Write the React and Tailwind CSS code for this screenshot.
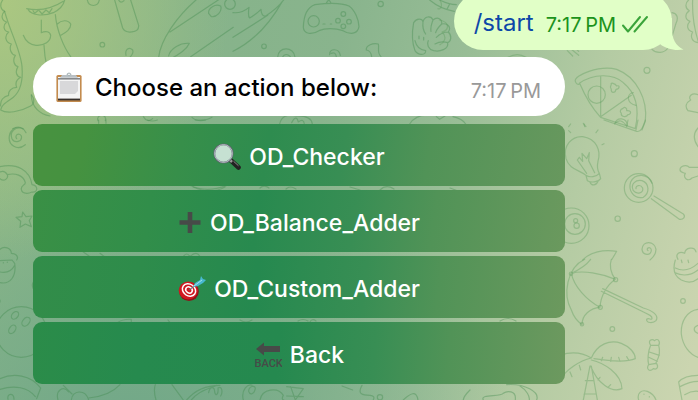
import React from "react";

function Doodles() {
  return (
    <svg
      className="pointer-events-none absolute inset-0 h-full w-full"
      viewBox="0 0 698 400"
      preserveAspectRatio="xMinYMin slice"
      fill="none"
      strokeLinecap="round"
      strokeLinejoin="round"
      aria-hidden="true"
    >
      <g stroke="#408a4d" strokeOpacity="0.38" strokeWidth="3.6">
        <g transform="scale(.3333)">
          {/* dinosaur */}
          <path d="M8 0C-2 14 2 30 14 34C2 44 4 62 20 66C8 76 10 94 26 96C12 108 16 128 34 132C26 146 34 164 46 166C36 182 44 198 54 200C44 216 50 230 62 232C48 240 46 252 50 262C34 262 24 274 26 286C10 290 0 302 2 318" />
          <path d="M14 34C28 90 62 150 66 200C70 250 60 275 40 292C20 306 4 314 2 330C20 342 60 336 92 318C104 312 104 296 94 284M132 136C134 180 144 222 160 260" />
          <path d="M80 26C110 32 150 30 190 4M84 28C92 46 130 50 160 38C176 30 190 18 194 0M98 30l6 10l12-10l10 12l12-12l10 8l8-12M124 60V98C136 92 150 94 152 106C152 124 134 138 108 136C90 134 76 122 70 106M166 44C170 90 190 140 212 170M172 72C184 60 204 58 212 72C214 88 196 98 182 106" />
          {/* tube, dots and leaf */}
          <path d="M344 0L368 84C376 102 418 100 416 76L392 0M356 0q6 12 16 2M262 0C266 22 294 22 298 0" />
          <circle cx="307" cy="134" r="7" />
          <path d="M378 166C374 146 388 140 398 150C402 160 394 166 390 172" />
          <path d="M588 0C530 50 482 120 476 172M510 96L700 -30M506 168C510 146 540 128 568 130C560 150 534 166 506 180M572 170L700 82M626 40C624 24 646 10 662 18C668 34 650 52 634 50Z" />
          <circle cx="690" cy="12" r="16" />
          <path d="M294 362a12 12 0 1 1 22 0M430 350q12 20 28 6M576 352q22 20 60 0M38 386q16-10 32 0M94 286C94 320 120 344 150 348" />
        </g>
        <g transform="translate(233 0) scale(.3333)">
          {/* gamepad */}
          <path d="M246 14C290 8 330 10 348 18C366 30 378 62 378 80C374 104 350 104 330 92C306 84 276 84 258 92C236 106 212 102 211 82C212 50 222 22 246 14ZM280 10q8-18 14 0M270 72h6M292 72h4" />
          <circle cx="242" cy="64" r="17" />
          <circle cx="331" cy="42" r="7" /><circle cx="315" cy="62" r="7" /><circle cx="348" cy="65" r="7" /><circle cx="331" cy="79" r="7" />
          <circle cx="443" cy="12" r="8" /><circle cx="93" cy="139" r="7" />
          <path d="M0 38C20 40 34 34 48 22C46 38 44 48 50 54C64 46 74 38 84 28C84 42 90 50 98 48C120 34 140 16 152 0M0 112L104 46M0 154C60 124 110 72 148 4" />
          <path d="M134 172C134 138 184 138 186 172M148 172q10-16 24-2M290 164C288 144 318 144 322 166M294 160q14-6 16 10M400 150C398 136 420 128 436 132C440 148 430 156 444 170M400 150q14 2 16 20" />
          {/* baseball glove */}
          <path d="M546 152C534 120 538 90 542 68C550 54 568 54 570 66C574 48 594 46 600 60C614 48 628 58 626 72C644 68 656 82 646 96C658 108 654 124 644 128C648 148 620 156 602 152C586 148 580 132 586 122M570 66C568 84 572 94 578 102M600 60C594 76 592 84 594 94M626 72C616 82 610 90 608 98M646 96q-20 0-36 16M644 128q-20-6-38 4M546 122C550 140 562 150 578 152C580 166 556 168 546 152M558 108v8M572 112v8" />
          <path d="M590 0C614 20 640 30 664 34M620 0C640 10 656 14 670 14M650 12l-8 16" />
          <path d="M140 372q8-34 50-24q44-2 48 24M176 368q14-26 20-2q16-12 18 6M530 372q20-30 60-26M610 350l10 8l16-10M660 350q28 6 38 22" />
        </g>
      </g>
      <g stroke="#5c9c5b" strokeOpacity="0.38" strokeWidth="3.6">
        <g transform="translate(440 0) scale(.3333)">
          {/* pizza slice */}
          <path d="M406 244C400 226 480 194 530 208C590 230 624 300 616 364L606 390M418 250C460 220 520 220 550 248C590 280 598 330 586 384M406 244q4 12 14 8C436 290 456 324 482 352L586 386M482 230V350L574 286" />
          <circle cx="470" cy="284" r="26" />
          <path d="M580 278C560 280 558 310 588 316M524 372C530 350 560 352 562 376M514 254C510 246 526 250 530 258C542 254 538 268 528 268C526 280 512 280 514 268C508 260 512 258 514 254ZM548 326C554 318 562 324 560 332C576 330 574 344 564 344C558 354 542 350 544 340C538 334 542 328 548 326Z" />
          <circle cx="621" cy="211" r="9" />
          <path d="M382 152l16 16M394 148l22 18M404 142l12 12M204 172q28-16 54 0M696 38C712 40 716 54 708 70L694 116M636 148C650 162 672 160 684 144" />
          <path d="M746 0C734 10 736 26 748 32C734 42 734 58 750 64C738 76 742 92 758 96C750 110 756 126 774 128M758 0C756 50 762 90 780 140M774 284C756 276 744 290 752 300C738 308 734 320 744 332L774 338" />
          <path d="M0 0C10 20 0 30 -6 26M-2 60C30 66 28 90 6 96C24 112 10 130 0 134" />
          <path d="M386 380l6-8M430 370l8 10" />
        </g>
        <g transform="translate(560 120) scale(.3333)">
          {/* bulb */}
          <path d="M78 166C60 150 28 150 18 116C8 76 36 48 68 50C108 56 124 90 114 124C110 142 112 150 118 160M78 166C88 174 110 170 118 160L122 176C114 188 92 188 82 182ZM90 186C94 198 108 198 114 184M80 160L52 120L58 112L68 124L66 100L80 116L88 98L86 122L104 158M26 32l6 6M72 12l2 8M114 30l-6 8M132 71l-6 3" />
          <path d="M132 0L230 34C244 38 250 18 256 0M166 10q16-18 34 8M204 0l-4 20M234 0l-6 30" />
          <circle cx="223" cy="101" r="9" /><circle cx="173" cy="296" r="8" />
          {/* lollipop */}
          <circle cx="236" cy="204" r="43" />
          <path d="M228 206C226 196 242 192 248 204C252 220 230 224 220 212C210 192 228 178 246 182C268 190 270 218 250 232M250 232C220 238 204 210 212 186C226 158 264 160 276 190M274 236L358 298C370 300 378 290 370 282L282 228" />
          <path d="M414 142L388 142C380 132 360 138 360 150C362 158 370 158 376 160C368 174 384 186 396 174L414 168M414 24Q392 48 414 80" />
          {/* eight ball */}
          <circle cx="34" cy="317" r="53" /><circle cx="45" cy="312" r="31" /><circle cx="47" cy="302" r="6" /><circle cx="50" cy="317" r="8" />
          <path d="M264 392C256 384 272 378 274 390C274 410 248 406 246 388C248 360 284 362 288 388C288 402 280 412 270 420M68 420C90 396 130 388 170 394L156 418M354 418C344 402 360 392 374 400C376 382 404 378 408 396" />
        </g>
        <g transform="translate(560 260) scale(.3333)">
          {/* umbrella */}
          <path d="M74 -2C20 24 8 104 34 150C40 168 52 184 66 194C66 164 92 144 120 142C122 108 140 76 166 58C146 30 150 10 154 -2M34 40C70 30 124 40 166 58M34 40C42 80 80 120 120 142M34 40C64 26 80 14 92 -2M128 86L250 144C278 152 298 166 288 182C280 190 258 190 260 178C268 172 272 182 276 176C278 166 262 162 246 154L124 94" />
          <circle cx="33" cy="41" r="5" /><circle cx="121" cy="142" r="6" /><circle cx="167" cy="59" r="6" /><circle cx="66" cy="193" r="5" />
          <circle cx="157" cy="207" r="7" /><circle cx="369" cy="123" r="7" />
          {/* palm */}
          <path d="M94 294C64 276 34 274 0 286M94 294C112 252 150 238 184 250C210 260 226 280 226 296C196 310 140 302 102 296M94 294C60 302 18 328 0 360M94 300C130 308 184 340 186 386C154 400 112 370 92 318M90 318L70 420M94 318L112 420M76 362h26M72 402h36M124 302l4-10M152 304l2-12M180 304l-4-12M206 300l-6-10M30 336l6 14M58 316l4 14M120 352l-6 8M152 374l-6 6" />
          {/* sweet */}
          <path d="M272 256C262 240 276 236 284 242C294 232 302 246 296 256C302 274 296 294 288 308C298 322 290 330 280 326C268 338 258 326 266 314C262 300 264 274 272 256ZM272 256L296 256M268 276L298 286M266 292L292 304M266 314L288 310" />
          <path d="M346 0C338 26 342 48 364 60C384 70 402 66 414 56M346 24C370 36 394 28 414 10M344 38C370 50 396 44 414 30M364 0l2 8M384 0l2 8M414 148C380 152 362 186 364 222C368 258 390 284 414 292M414 196C400 200 398 214 414 220M236 420C230 400 244 388 262 394C278 400 286 414 288 420M252 402v1M268 410v1M356 366C370 350 394 346 414 346M356 366L366 420M360 380Q390 364 414 364M374 404Q394 392 414 394" />
        </g>
      </g>
      <g stroke="#408a4d" strokeOpacity="0.38" strokeWidth="3.6">
        <g transform="translate(0 120) scale(.3333)">
          <path d="M50 56C42 46 58 36 64 48C68 64 44 72 36 56C24 26 66 10 78 38M76 74C52 94 24 76 28 48C30 30 46 20 62 24M0 140C50 128 90 150 96 194C114 196 116 218 96 216C84 222 66 222 64 208C62 194 76 196 76 188C70 166 46 158 22 164C26 176 12 186 0 176M0 156q14-6 22 8M68 276L78 290L96 288L88 302L94 320L76 312L60 322L62 304L48 292L66 290ZM0 388C12 376 34 384 34 400C50 400 56 412 50 420M296 0v10M318 0v10M442 0q16 6 30 0M586 0h30M570 196Q620 220 680 196M250 396l20 14M300 400l16 12M550 410q10-16 20 0q20-20 30 0" />
        </g>
        <g transform="translate(0 260) scale(.3333)">
          <path d="M0 2L36 0L44 10C50 50 30 74 0 68M0 36C20 40 36 32 44 16M10 8v1M22 6v1M0 120v6M100 66q-6 10 0 20" />
          <circle cx="64" cy="216" r="76" />
          <ellipse cx="45" cy="166" rx="9" ry="13" transform="rotate(40 45 166)" /><ellipse cx="78" cy="185" rx="10" ry="15" transform="rotate(40 78 185)" /><ellipse cx="37" cy="208" rx="9" ry="14" transform="rotate(35 37 208)" />
          <path d="M0 356C40 338 92 344 122 384L110 416M0 388C44 374 84 382 106 410M24 418C20 398 42 398 42 418M352 188Q370 176 394 178V188M504 180l6 8M174 420C166 390 190 376 206 396M190 376L216 402M214 420C216 390 256 386 266 420M266 414C310 410 340 396 360 374M466 374C460 390 464 406 468 420M516 374L550 420M560 420C580 396 610 376 660 376M574 420C600 386 640 384 650 376M626 398C630 376 644 380 644 396C648 412 656 402 654 384C668 376 668 400 662 408" />
        </g>
        <g transform="translate(170 360) scale(.3333)">
          <path d="M220 120C212 90 234 70 246 76M236 94C236 78 256 74 256 86C252 104 240 106 236 94ZM270 120C276 86 324 80 340 106C334 116 338 120 342 120M350 80L400 86L376 120L362 80M350 108L400 110M516 78L548 90M576 76C560 104 580 106 600 106C620 108 608 120 610 120M700 120C720 100 740 90 744 120M940 120C930 100 990 112 1000 100C1010 92 1040 90 1036 120M900 90C880 110 880 120 880 120M1010 74C1064 70 1110 96 1100 120M1050 78C1070 90 1080 110 1078 120" />
          <circle cx="630" cy="112" r="8" />
        </g>
        <path d="M193 187q18 8 32 0M260 188q4-4 9 0M286 189q4-4 10 0M350 187l10 3M380 190q6-6 14-1M298 321q5-3 10 0M310 322q2-4 6-1M240 320q6 4 12 0M450 188l8 3M500 321q8-5 16 0" strokeWidth="1.2" />
      </g>
    </svg>
  );
}

function Clipboard() {
  return (
    <svg className="h-8 w-7 shrink-0" viewBox="0 0 28 32" aria-hidden="true">
      <rect x="1.4" y="4" width="25.2" height="27" rx="1.6" fill="#c38b4e" />
      <rect x="3" y="6" width="22" height="23" fill="#f4f4f4" />
      <path d="M5 10h18v10l-3 3H5z" fill="#d8d8da" />
      <path d="M3 27.6h22v1.8H3z" fill="#37302c" />
      <path d="M3 7h22v1.6H3z" fill="#85888b" />
      <path d="M5 6.8 7 4h4.5C11.5 1 16.5 1 16.5 4H21l2 2.8z" fill="#b9c0c4" />
      <circle cx="14" cy="3.4" r="1.3" fill="#fff" stroke="#8fa0a4" strokeWidth=".7" />
    </svg>
  );
}

function Magnifier() {
  return (
    <svg className="h-7 w-7 shrink-0" viewBox="0 0 28 28" aria-hidden="true">
      <path d="m18 17.500 7.500 7" stroke="#222" strokeWidth="4.600" strokeLinecap="round" />
      <path d="m20.500 18.200 5 4.600" stroke="#8a8a8a" strokeWidth="1" />
      <path d="m16 16 3 3" stroke="#999" strokeWidth="2.500" />
      <circle cx="10.500" cy="10.500" r="9.200" fill="#c6e1d2" stroke="#5d666b" strokeWidth="1.800" />
      <circle cx="10.500" cy="10.500" r="8.900" fill="none" stroke="#c3c9d4" strokeWidth=".9" />
    </svg>
  );
}

function Plus() {
  return (
    <svg className="h-7 w-6 shrink-0" viewBox="0 0 24 28" aria-hidden="true">
      <path d="M1.500 13.500h21M12 3v21" stroke="#474a48" strokeWidth="4.600" />
    </svg>
  );
}

function Dart() {
  return (
    <svg className="h-7 w-7 shrink-0" viewBox="0 0 28 28" aria-hidden="true">
      <ellipse cx="11" cy="16.500" rx="9.800" ry="9.500" fill="#8e1419" />
      <ellipse cx="10.300" cy="15.500" rx="9.600" ry="9" fill="#cf1820" />
      <g fill="none" stroke="#fff" strokeWidth="1.500" transform="rotate(35 11 15)">
        <ellipse cx="11" cy="15" rx="7" ry="5.800" />
        <ellipse cx="11" cy="15" rx="3.500" ry="2.800" />
      </g>
      <path d="m11 15 10-7" stroke="#55737a" strokeWidth="1" />
      <path d="m15 12 2-4 5-3 1-4 2 3 3 1-3 3-5 3z" fill="#48b8d0" />
      <path d="m16 11 8-6" stroke="#b9edf3" strokeWidth=".8" />
    </svg>
  );
}

function BackArrow() {
  return (
    <svg className="h-7 w-7 shrink-0" viewBox="0 0 28 28" aria-hidden="true">
      <path d="M2 8 10 1.500V5h16v6H10v3.500z" fill="#474a48" />
      <text x="0.500" y="25.500" fontFamily="Roboto, sans-serif" fontSize="11" fontWeight="500" fill="#474a48">BACK</text>
    </svg>
  );
}

const actions = [
  {
    label: "OD_Checker",
    icon: Magnifier,
    tone: "bg-[linear-gradient(100deg,#489240_0%,#459240_10%,#378f4a_28%,#2e8c4f_44%,#388e54_58%,#519357_74%,#68985e_100%)]",
  },
  {
    label: "OD_Balance_Adder",
    icon: Plus,
    tone: "bg-[linear-gradient(98deg,#3a9045_0%,#318e4a_22%,#288a4f_42%,#388e54_60%,#519357_75%,#6b995e_100%)]",
  },
  {
    label: "OD_Custom_Adder",
    icon: Dart,
    tone: "bg-[linear-gradient(96deg,#328d49_0%,#2e8c4b_20%,#25894f_42%,#388e54_62%,#519357_76%,#6c995e_100%)]",
  },
  {
    label: "Back",
    icon: BackArrow,
    tone: "bg-[linear-gradient(94deg,#2b8c49_0%,#268a4e_20%,#25894f_46%,#388e54_64%,#519357_78%,#6d995f_100%)]",
  },
];

export default function App() {
  return (
    <main className="relative min-h-screen overflow-hidden bg-[radial-gradient(ellipse_230px_260px_at_0px_0px,#abc781_0%,#abc78100_100%),radial-gradient(ellipse_380px_260px_at_130px_420px,#72a888_0%,#72a88800_100%),linear-gradient(104deg,#8fb987_0%,#86b38a_24%,#89b48d_44%,#98bd96_60%,#b4cba3_78%,#cbd5b0_98%)] font-['Inter','Liberation_Sans',sans-serif]">
      <Doodles />
      <div className="relative flex flex-col pb-4 pl-[33px] pr-[26px]">
        <div className="relative -mt-2 flex h-[58px] items-center gap-3 self-end rounded-full bg-[#e1ffc7] pl-5 pr-[22px] pt-1">
          <a href="#start" className="text-[24px] leading-7 text-[#0c47a8]">/start</a>
          <span className="flex items-center gap-1 pt-1 text-[20px] leading-7 text-[#1c931c]">
            <time>7:17{"\u2009"}PM</time>
            <svg className="h-5 w-[30px]" viewBox="0 0 30 20" fill="none" stroke="#3aa43a" strokeWidth="2" strokeLinecap="round" strokeLinejoin="round" role="img" aria-label="Read">
              <path d="m3 10.500 5 6L20 2M14.500 16.500 27 2" />
            </svg>
          </span>
          <svg className="absolute -right-3 bottom-0 h-8 w-6" viewBox="0 0 24 32" fill="#e1ffc7" aria-hidden="true">
            <path d="M4 0h8v11c0 10 3.500 16.500 11.500 20.500C15 33 6 31 0 26z" />
          </svg>
        </div>

        <section className="mt-[7px] flex w-full max-w-[532px] flex-col gap-1">
          <div className="mb-1 flex min-h-[59px] items-center gap-3 rounded-[30px] bg-white pl-[22px] pr-6 text-black">
            <Clipboard />
            <p className="grow pt-0.5 text-[24px] font-medium leading-7">Choose an action below:</p>
            <time className="shrink-0 pt-2 text-[20px] leading-7 text-[#999]">7:17{"\u2009"}PM</time>
          </div>
          {actions.map(({ label, icon: Icon, tone }) => (
            <button
              key={label}
              type="button"
              className={`flex h-[62px] w-full items-center justify-center gap-2 rounded-[9px] pt-1 text-[23px] font-medium leading-7 text-white ${tone}`}
            >
              <Icon />
              <span>{label}</span>
            </button>
          ))}
        </section>
      </div>
    </main>
  );
}
